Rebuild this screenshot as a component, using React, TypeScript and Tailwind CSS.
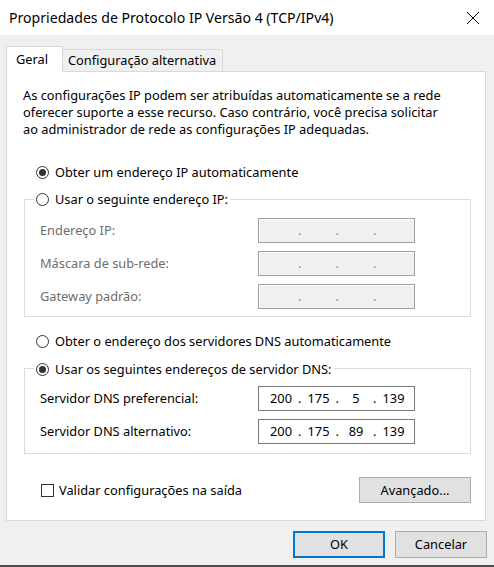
import React from "react";

function Radio({ checked }: { checked?: boolean }) {
  return (
    <span className="w-[13px] h-[13px] rounded-full border border-[#333333] bg-white flex items-center justify-center shrink-0">
      {checked && <span className="w-[7px] h-[7px] rounded-full bg-[#333333]" />}
    </span>
  );
}

function IpBox({ values, disabled }: { values: string[]; disabled?: boolean }) {
  return (
    <div
      className={
        disabled
          ? "w-[157px] h-[25px] border border-[#a0a0a0] bg-[#f0f0f0] shadow-[inset_1px_1px_0_#ffffff] flex items-center pl-[5px] text-[#7a8594]"
          : "w-[157px] h-[25px] border border-[#7a7a7a] bg-white flex items-center pl-[5px] text-black"
      }
    >
      {values.map((v, i) => (
        <React.Fragment key={i}>
          {i > 0 && <span className="w-[3.5px] flex justify-center">.</span>}
          <span className="w-[34px] text-center">{v}</span>
        </React.Fragment>
      ))}
    </div>
  );
}

function Row({ label, values, disabled }: { label: string; values: string[]; disabled?: boolean }) {
  return (
    <div className="flex items-center h-[25px]">
      <span className={disabled ? "w-[218px] text-[#6d6d6d]" : "w-[218px] text-black"}>{label}</span>
      <IpBox values={values} disabled={disabled} />
    </div>
  );
}

export default function App() {
  const empty = ["", "", "", ""];
  return (
    <div className="w-[494px] h-[567px] bg-[#f0f0f0] flex flex-col font-['Noto_Sans',sans-serif] text-[12.8px] leading-[17px] text-black overflow-hidden">
      {/* Title bar */}
      <div className="h-[35px] bg-white flex items-center justify-between pl-[9px] pr-[14px] shrink-0">
        <span className="text-[14.1px] leading-[20px]">Propriedades de Protocolo IP Versão 4 (TCP/IPv4)</span>
        <svg width="14" height="14" viewBox="0 0 14 14" className="mt-[1px]">
          <path d="M1 1 L13 13 M13 1 L1 13" stroke="#000" strokeWidth="1" />
        </svg>
      </div>

      {/* Tabs */}
      <div className="ml-[6px] mt-[11px] flex items-end h-[25px]">
        <div className="relative z-10 w-[57px] h-[26px] -mb-px bg-white border border-b-0 border-[#d9d9d9] flex items-center pl-[9px] pb-[1px]">
          Geral
        </div>
        <div className="w-[160px] h-[22px] bg-[#f0f0f0] border border-l-0 border-b-0 border-[#d9d9d9] flex items-center pl-[5px] whitespace-nowrap">
          Configuração alternativa
        </div>
      </div>

      {/* Panel */}
      <div className="ml-[6px] w-[480px] bg-white border border-[#d9d9d9] flex flex-col pt-[15px] pb-[17px]">
        <p className="pl-[16px] whitespace-nowrap">
          As configurações IP podem ser atribuídas automaticamente se a rede
          <br />
          oferecer suporte a esse recurso. Caso contrário, você precisa solicitar
          <br />
          ao administrador de rede as configurações IP adequadas.
        </p>

        <div className="mt-[25px] ml-[29px] h-[18px] flex items-center gap-[6px]">
          <Radio checked />
          <span>Obter um endereço IP automaticamente</span>
        </div>

        <fieldset className="mt-[9px] ml-[17px] mr-[14px] border border-[#dcdcdc] min-w-0">
          <legend className="ml-[9px] px-[2px]">
            <span className="h-[18px] inline-flex items-center gap-[6px]">
              <Radio />
              <span>Usar o seguinte endereço IP:</span>
            </span>
          </legend>
          <div className="pl-[15px] pt-[8px] pb-[7px] flex flex-col gap-[8px]">
            <Row label="Endereço IP:" values={empty} disabled />
            <Row label="Máscara de sub-rede:" values={empty} disabled />
            <Row label="Gateway padrão:" values={empty} disabled />
          </div>
        </fieldset>

        <div className="mt-[16px] ml-[29px] h-[18px] flex items-center gap-[6px]">
          <Radio />
          <span>Obter o endereço dos servidores DNS automaticamente</span>
        </div>

        <fieldset className="mt-[9px] ml-[17px] mr-[14px] border border-[#dcdcdc] min-w-0">
          <legend className="ml-[9px] px-[2px]">
            <span className="h-[18px] inline-flex items-center gap-[6px]">
              <Radio checked />
              <span>Usar os seguintes endereços de servidor DNS:</span>
            </span>
          </legend>
          <div className="pl-[15px] pt-[8px] pb-[9px] flex flex-col gap-[8px]">
            <Row label="Servidor DNS preferencial:" values={["200", "175", "5", "139"]} />
            <Row label="Servidor DNS alternativo:" values={["200", "175", "89", "139"]} />
          </div>
        </fieldset>

        <div className="mt-[23px] flex items-center h-[26px] pr-[14px]">
          <div className="ml-[34px] flex items-center gap-[5px]">
            <span className="w-[13px] h-[13px] border border-[#333333] bg-white shrink-0" />
            <span>Validar configurações na saída</span>
          </div>
          <div className="ml-auto w-[112px] h-[26px] bg-[#e1e1e1] border border-[#adadad] flex items-center justify-center">
            Avançado...
          </div>
        </div>
      </div>

      {/* Buttons */}
      <div className="mt-[10px] flex justify-end gap-[10px] pr-[7px]">
        <div className="w-[92px] h-[27px] bg-[#e1e1e1] border-2 border-[#0078d7] flex items-center justify-center">
          OK
        </div>
        <div className="w-[92px] h-[27px] bg-[#e1e1e1] border border-[#adadad] flex items-center justify-center">
          Cancelar
        </div>
      </div>

      <div className="flex-1" />
      <div className="h-[2px] bg-[#4b4b4b] shrink-0" />
    </div>
  );
}
